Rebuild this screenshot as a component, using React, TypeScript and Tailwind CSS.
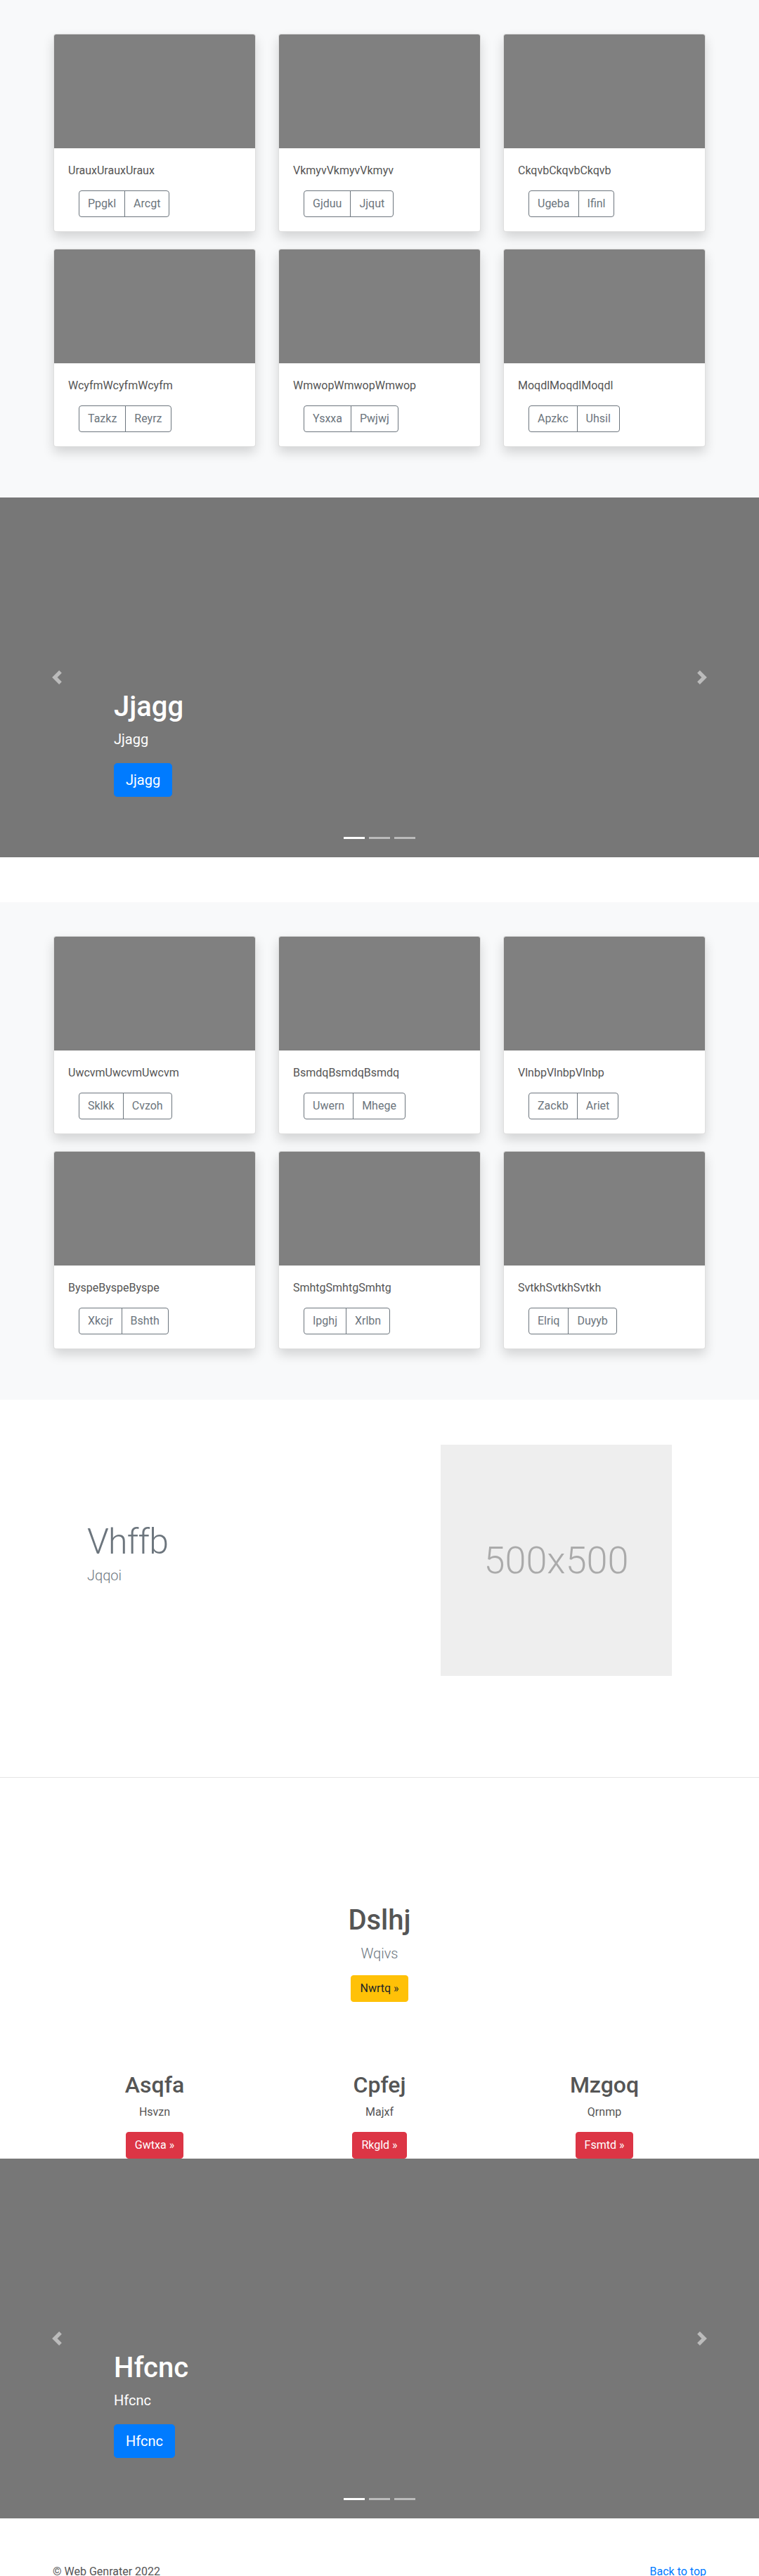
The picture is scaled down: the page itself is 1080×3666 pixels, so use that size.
import React from "react";

type CardData = { title: string; a: string; b: string };

const album1: CardData[] = [
  { title: "UrauxUrauxUraux", a: "Ppgkl", b: "Arcgt" },
  { title: "VkmyvVkmyvVkmyv", a: "Gjduu", b: "Jjqut" },
  { title: "CkqvbCkqvbCkqvb", a: "Ugeba", b: "Ifinl" },
  { title: "WcyfmWcyfmWcyfm", a: "Tazkz", b: "Reyrz" },
  { title: "WmwopWmwopWmwop", a: "Ysxxa", b: "Pwjwj" },
  { title: "MoqdlMoqdlMoqdl", a: "Apzkc", b: "Uhsil" },
];

const album2: CardData[] = [
  { title: "UwcvmUwcvmUwcvm", a: "Sklkk", b: "Cvzoh" },
  { title: "BsmdqBsmdqBsmdq", a: "Uwern", b: "Mhege" },
  { title: "VlnbpVlnbpVlnbp", a: "Zackb", b: "Ariet" },
  { title: "ByspeByspeByspe", a: "Xkcjr", b: "Bshth" },
  { title: "SmhtgSmhtgSmhtg", a: "Ipghj", b: "Xrlbn" },
  { title: "SvtkhSvtkhSvtkh", a: "Elriq", b: "Duyyb" },
];

function Card({ d }: { d: CardData }) {
  return (
    <div className="w-[288px] overflow-hidden rounded border border-black/[0.125] bg-white shadow-[0_0.5rem_1rem_rgba(0,0,0,0.15)]">
      <div className="h-[162px] bg-[#808080]" />
      <div className="p-5">
        <p className="mb-4 text-base leading-6 text-[#555]">{d.title}</p>
        <div className="ml-[15px] flex w-fit">
          <button className="h-[38px] rounded-l border border-[#6c757d] px-3 text-base leading-6 text-[#6c757d]">
            {d.a}
          </button>
          <button className="-ml-px h-[38px] rounded-r border border-[#6c757d] px-3 text-base leading-6 text-[#6c757d]">
            {d.b}
          </button>
        </div>
      </div>
    </div>
  );
}

function Album({ cards }: { cards: CardData[] }) {
  return (
    <section className="bg-[#f8f9fa] pb-[72px] pt-12">
      <div className="mx-auto grid w-[928px] grid-cols-3 gap-x-8 gap-y-6">
        {cards.map((c) => (
          <Card key={c.title} d={c} />
        ))}
      </div>
    </section>
  );
}

function Prev() {
  return (
    <svg width="20" height="20" viewBox="0 0 8 8" fill="#fff" className="opacity-50">
      <path d="M5.25 0l-4 4 4 4 1.5-1.5L4.25 4l2.5-2.5L5.25 0z" />
    </svg>
  );
}

function Next() {
  return (
    <svg width="20" height="20" viewBox="0 0 8 8" fill="#fff" className="opacity-50">
      <path d="M2.75 0l-1.5 1.5L3.75 4l-2.5 2.5L2.75 8l4-4-4-4z" />
    </svg>
  );
}

function Carousel({ text }: { text: string }) {
  return (
    <div className="relative mb-16 h-[512px] bg-[#777777]">
      <div className="absolute bottom-0 left-0 top-0 flex w-[15%] items-center justify-center">
        <Prev />
      </div>
      <div className="absolute bottom-0 right-0 top-0 flex w-[15%] items-center justify-center">
        <Next />
      </div>
      <div className="absolute bottom-[86px] left-[15%] right-[15%] text-left text-white">
        <h1 className="mb-2 text-[40px] font-medium leading-[48px]">{text}</h1>
        <p className="mb-5 text-xl leading-7">{text}</p>
        <button className="rounded-[4.8px] border border-[#007bff] bg-[#007bff] px-4 py-2 text-xl leading-[30px] text-white">
          {text}
        </button>
      </div>
      <div className="absolute bottom-[26px] left-0 right-0 flex justify-center gap-1.5">
        <span className="h-[3px] w-[30px] bg-white" />
        <span className="h-[3px] w-[30px] bg-white/50" />
        <span className="h-[3px] w-[30px] bg-white/50" />
      </div>
    </div>
  );
}

function Column({ h, p, b }: { h: string; p: string; b: string }) {
  return (
    <div className="flex flex-col items-center text-center">
      <h2 className="mb-2 text-[32px] font-medium leading-[38.4px] text-[#555]">{h}</h2>
      <p className="mb-4 text-base leading-6 text-[#555]">{p}</p>
      <button className="h-[38px] rounded border border-[#dc3545] bg-[#dc3545] px-3 text-base leading-6 text-white">
        {b} »
      </button>
    </div>
  );
}

export default function App() {
  return (
    <div className="bg-white font-[family-name:Roboto,'Liberation_Sans',sans-serif]">
      <Album cards={album1} />
      <Carousel text="Jjagg" />
      <Album cards={album2} />

      <section className="pt-16">
        <div className="mx-auto flex w-[960px] items-center">
          <div className="flex-1 pl-16">
            <h2 className="mb-2 text-[50px] font-light leading-none tracking-[-0.8px] text-[#6c757d]">Vhffb</h2>
            <p className="mb-4 text-xl font-light leading-[30px] text-[#6c757d]">Jqqoi</p>
          </div>
          <div className="mr-16 flex h-[329px] w-[329px] items-center justify-center bg-[#eeeeee]">
            <span className="text-[54px] font-light text-[#aaaaaa]">500x500</span>
          </div>
        </div>
        <hr className="mt-[144px] border-0 border-t border-black/10" />
      </section>

      <section className="pt-[179px] text-center">
        <h1 className="mb-2 text-[40px] font-medium leading-[48px] text-[#555]">Dslhj</h1>
        <p className="mb-4 text-xl font-light leading-[30px] text-[#6c757d]">Wqivs</p>
        <button className="h-[38px] rounded border border-[#ffc107] bg-[#ffc107] px-3 text-base leading-6 text-[#212529]">
          Nwrtq »
        </button>
        <div className="mx-auto mt-[99px] grid w-[960px] grid-cols-3">
          <Column h="Asqfa" p="Hsvzn" b="Gwtxa" />
          <Column h="Cpfej" p="Majxf" b="Rkgld" />
          <Column h="Mzgoq" p="Qrnmp" b="Fsmtd" />
        </div>
      </section>

      <Carousel text="Hfcnc" />

      <footer className="mx-auto flex w-[930px] justify-between text-base leading-6">
        <p className="text-[#555]">© Web Genrater 2022</p>
        <a className="text-[#007bff]" href="#">
          Back to top
        </a>
      </footer>
    </div>
  );
}
